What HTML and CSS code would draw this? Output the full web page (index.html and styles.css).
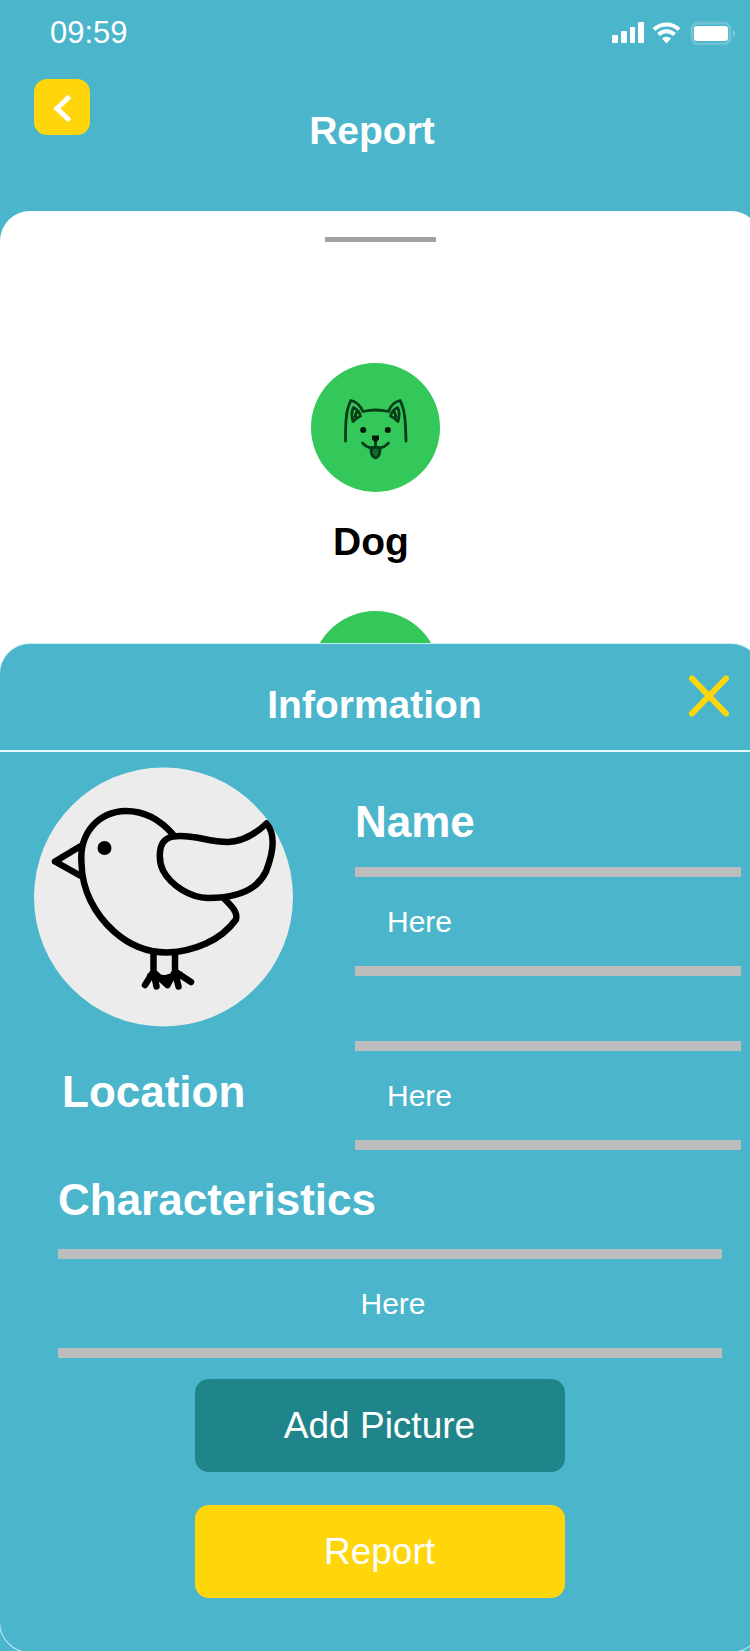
FILE: index.html
```html
<!DOCTYPE html>
<html lang="en">
<head>
<meta charset="utf-8">
<meta name="viewport" content="width=device-width, initial-scale=1">
<title>Report</title>
<link rel="stylesheet" href="styles.css">
</head>
<body>
<div class="app">
  <header>
    <div class="status">
      <time class="clock">09:59</time>
      <svg class="status-icons" viewBox="0 0 126 24" aria-hidden="true">
        <g fill="#fff">
          <rect x="1" y="14" width="6" height="8" rx="1"/>
          <rect x="10" y="10" width="6" height="12" rx="1"/>
          <rect x="19" y="6" width="5" height="16" rx="1"/>
          <rect x="27" y="1" width="6" height="21" rx="1"/>
          <path d="M55.500 22.500l-4.500-5a6.500 6.500 0 0 1 9 0z"/>
          <rect x="83" y="5" width="34" height="15" rx="3"/>
        </g>
        <g fill="none" stroke="#fff" stroke-width="4">
          <path d="M43 8.500a18 18 0 0 1 25 0"/>
          <path d="M47.500 13.500a11.500 11.500 0 0 1 16 0"/>
        </g>
        <rect x="81" y="2" width="38" height="21" rx="6" fill="none" stroke="#fff" stroke-opacity=".2" stroke-width="3"/>
        <path d="M122 9q5 3.500 0 7z" fill="#fff" fill-opacity=".3"/>
      </svg>
    </div>
    <div class="nav">
      <button class="back" type="button" aria-label="Back">
        <svg viewBox="0 0 56 56"><path d="M35.500 17.500L23 29.500l12.500 12" fill="none" stroke="#fff" stroke-width="5"/></svg>
      </button>
      <h1 class="title nav-title">Report</h1>
    </div>
  </header>

  <main class="sheet">
    <div class="handle"></div>
    <div class="animals">
      <div class="disc">
        <svg viewBox="0 0 129 129" fill="none" stroke="#053d16" stroke-width="2.800" stroke-linecap="round" stroke-linejoin="round" role="img" aria-label="Dog">
          <path d="M34.500 78C34.500 62 34.500 47 40 37.500C45 38.500 49 42 52 48.500Q64.500 45.500 77.500 48.500C80 42 84 38.500 89 37.500C94.500 47 94.500 62 95 78"/>
          <path d="M42.500 44.500Q48 47 49.500 53Q46 54.500 42 58.500Q39.500 50 42.500 44.500zM45.500 49l-1.500 5M86.500 44.500Q81 47 79.500 53Q83 54.500 87 58.500Q89.500 50 86.500 44.500zM83.500 49l1.500 5M51.500 80Q58 87 64.500 83.500Q71 87 77.500 80M64.500 76v7"/>
          <path d="M60 86Q60 94 64.500 95Q69 94 69 86L64.500 84z" fill="#166b2f"/>
          <g fill="#021a08" stroke="none"><circle cx="52.200" cy="67" r="3"/><circle cx="76.800" cy="67" r="3"/><path d="M61 72.500h7v4l-3.500 3-3.500-3z"/></g>
        </svg>
      </div>
      <h2 class="title animal-name">Dog</h2>
      <div class="disc"></div>
    </div>
  </main>

  <section class="panel" aria-labelledby="info-title">
    <div class="panel-head">
      <h2 class="title panel-title" id="info-title">Information</h2>
      <button class="close" type="button" aria-label="Close">
        <svg viewBox="0 0 40 42"><path d="M3 3.500l34 35M37 3.500l-34 35" stroke="#ffd60c" stroke-width="6" stroke-linecap="round"/></svg>
      </button>
    </div>
    <form class="form">
      <div class="grid">
        <svg class="avatar" viewBox="0 0 259 259" fill="none" stroke="#000" stroke-width="6.500" stroke-linecap="round" stroke-linejoin="round" role="img" aria-label="Bird">
          <circle cx="129.500" cy="129.500" r="129.500" fill="#ececec" stroke="none"/>
          <path d="M46 79L21 94L46 108"/>
          <path d="M139 67C126 52 110 43.500 92 43.500C64 44 45 66 47.500 96C48 122 60 146 80 164C98 180 116 185 133 185C160 184 187 173 202 152C204 145 198 139 191 132"/>
          <path d="M139 69C158 66 173 74.500 194 74.500C208 74 221 67 232.500 56C242 67 239 86 232 104C223 123 203 130.500 174 130.500C156 130 137 118 129 103C125 95 124.500 82 129 75Q133 70 139 69z"/>
          <path d="M119.500 187v17L111 217.500M119.500 204l3 15M121 206l12.500 11.500M141 187v17L133.500 217.500M141 204l3.500 15M141 204L157 214.500M116 208.500L131 211L146 207"/>
          <circle cx="70.500" cy="80.500" r="7" fill="#000" stroke="none"/>
        </svg>
        <div class="name-cell">
          <label class="label" for="name">Name</label>
          <input class="field" id="name" type="text" placeholder="Here">
        </div>
        <label class="label location-label" for="location">Location</label>
        <input class="field" id="location" type="text" placeholder="Here">
      </div>
      <div class="traits">
        <label class="label" for="traits">Characteristics</label>
        <input class="field field-center" id="traits" type="text" placeholder="Here">
      </div>
      <div class="actions">
        <button class="btn btn-picture" type="button">Add Picture</button>
        <button class="btn btn-report" type="submit">Report</button>
      </div>
    </form>
  </section>
</div>
</body>
</html>
```

FILE: styles.css
```css
* {
  box-sizing: border-box;
}

body {
  margin: 0;
  background: #4ab5cb;
  color: #fff;
  font-family: "Liberation Sans", Arial, sans-serif;
}

h1, h2 {
  margin: 0;
}

button {
  padding: 0;
  border: 0;
  background: none;
  color: inherit;
  font-family: inherit;
  cursor: pointer;
}

svg {
  display: block;
}

.app {
  display: flex;
  flex-direction: column;
  min-height: 100vh;
  overflow: hidden;
}

.title {
  font-size: 39px;
  line-height: 40px;
  font-weight: bold;
  text-align: center;
}

/* Status bar and navigation */

.status {
  display: flex;
  align-items: center;
  justify-content: space-between;
  height: 66px;
  padding: 0 13px 0 50px;
}

.clock {
  font-size: 31px;
}

.status-icons {
  width: 126px;
  height: 24px;
}

.nav {
  display: grid;
  grid-template-columns: 56px 1fr 56px;
  align-items: start;
  padding: 13px 40px 60px 34px;
}

.back {
  height: 56px;
  border-radius: 13px;
  background: #ffd60c;
}

.nav-title {
  padding-top: 32px;
}

/* White sheet with the animal list; it runs past the right edge */

.sheet {
  margin-right: -11px;
  border-radius: 30px 30px 0 0;
  background: #fff;
}

.handle {
  width: 111px;
  height: 5px;
  margin: 26px auto 0;
  background: #a2a2a2;
}

.animals {
  display: flex;
  flex-direction: column;
  align-items: center;
  padding: 121px 10px 0 0;
}

.disc {
  width: 129px;
  height: 129px;
  border-radius: 50%;
  background: #34c759;
}

.animal-name {
  margin: 30px 0 49px;
  padding-right: 9px;
  color: #000;
}

/* Information panel */

.panel {
  position: relative;
  flex: 1;
  margin: -96px -11px 0 0;
  border-radius: 30px;
  background: #4ab5cb;
  box-shadow: 0 0 0 1px #c8eef5;
}

.panel-head {
  display: grid;
  grid-template-columns: 40px 1fr 40px;
  padding: 31px 32px 25px 20px;
  border-bottom: 2px solid #e4fbff;
}

.panel-title {
  grid-column: 2;
  padding-top: 10px;
}

.close {
  height: 42px;
}

.form {
  padding: 15px 0 54px;
}

.grid {
  display: grid;
  grid-template-columns: 259px 1fr;
  gap: 14px 62px;
  padding: 0 20px 0 34px;
}

.avatar {
  width: 259px;
  height: 260px;
}

.label {
  display: block;
  font-size: 44px;
  line-height: 46px;
  font-weight: bold;
}

.name-cell {
  padding-top: 32px;
}

.name-cell .label {
  margin-bottom: 22px;
}

.location-label {
  align-self: center;
  padding: 0 0 8px 28px;
}

.field {
  display: block;
  width: 100%;
  height: 109px;
  padding: 0 32px;
  border: solid #bdbdbd;
  border-width: 10px 0;
  border-radius: 0;
  background: none;
  color: #fff;
  font-family: inherit;
  font-size: 30px;
}

.field::placeholder {
  color: #fff;
  opacity: 1;
}

.field-center {
  padding-right: 26px;
  text-align: center;
}

.traits {
  padding: 27px 39px 0 58px;
}

.traits .label {
  margin-bottom: 26px;
}

.actions {
  display: flex;
  flex-direction: column;
  align-items: center;
  gap: 33px;
  padding: 21px 2px 0 0;
}

.btn {
  width: 370px;
  max-width: 90%;
  height: 93px;
  border-radius: 14px;
  font-size: 37px;
}

.btn-picture {
  background: #20858a;
}

.btn-report {
  background: #ffd60c;
}
```
